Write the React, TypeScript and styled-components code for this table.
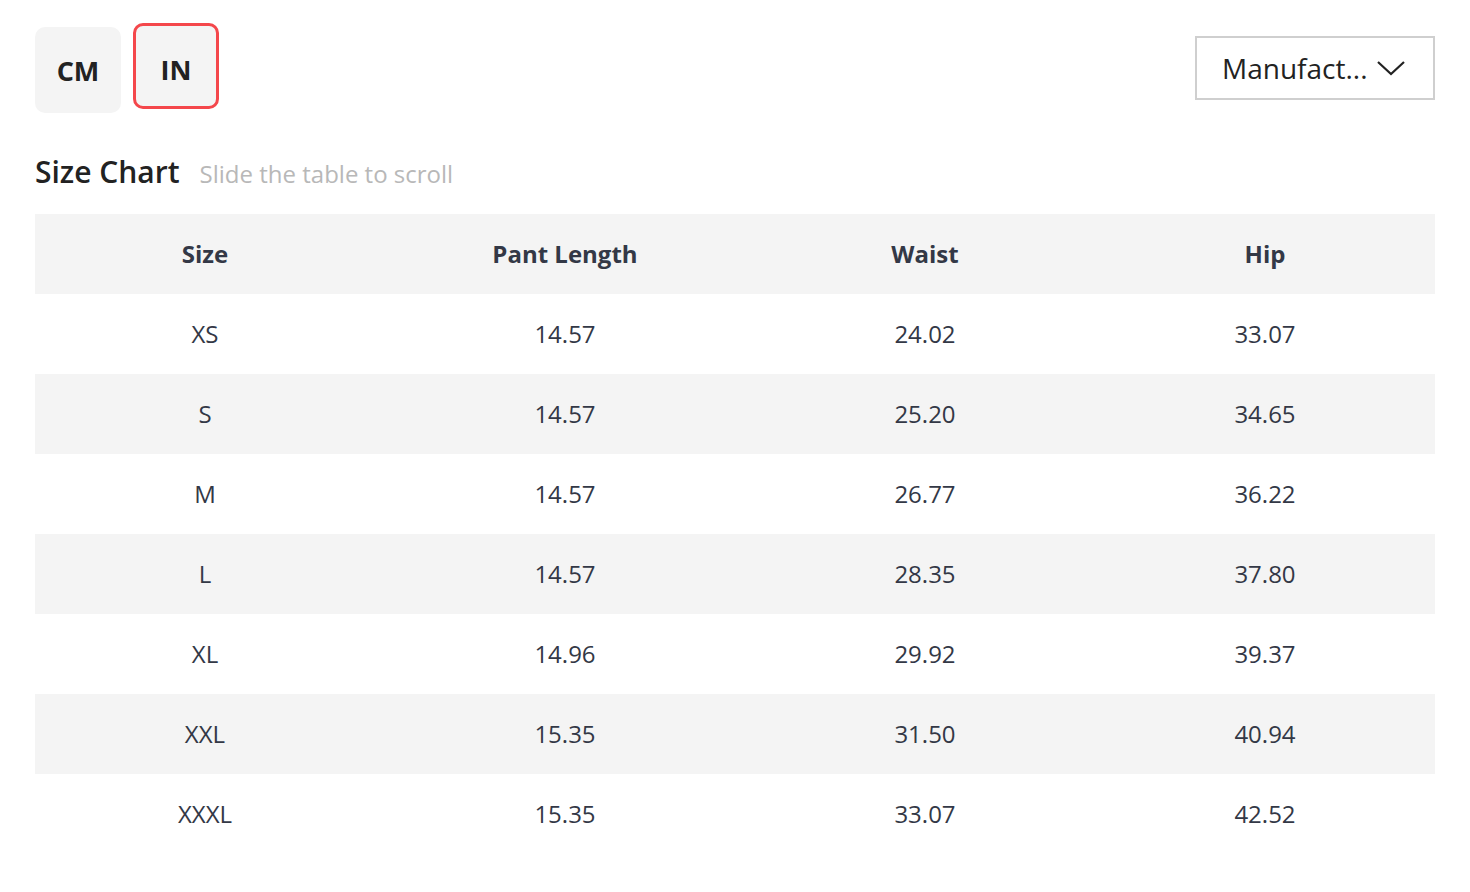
import React from "react";
import styled, { createGlobalStyle } from "styled-components";

const Global = createGlobalStyle`
  html, body { margin: 0; padding: 0; background: #fff; }
  body { font-family: "Open Sans", "Noto Sans", sans-serif; }
`;

const Page = styled.div`
  padding: 23px 35px 0 35px;
  width: 1400px;
`;

const TopBar = styled.div`
  display: flex;
  justify-content: space-between;
  align-items: flex-start;
`;

const UnitGroup = styled.div`
  display: flex;
  gap: 12px;
  align-items: flex-start;
`;

const UnitButton = styled.button<{ $active?: boolean }>`
  width: 86px;
  height: 86px;
  box-sizing: border-box;
  margin-top: ${(p) => (p.$active ? "0" : "4px")};
  border-radius: 10px;
  border: ${(p) => (p.$active ? "3px solid #f4474b" : "3px solid transparent")};
  background: #f4f4f4;
  font-family: "Open Sans", sans-serif;
  font-weight: 700;
  font-size: 27px;
  color: #222;
  display: flex;
  align-items: center;
  justify-content: center;
  padding: ${(p) => (p.$active ? "6px 0 0 0" : "0")};
  cursor: pointer;
`;

const Select = styled.div`
  margin-top: 13px;
  width: 240px;
  height: 64px;
  box-sizing: border-box;
  border: 2px solid #cfcfcf;
  display: flex;
  align-items: center;
  justify-content: space-between;
  padding: 0 27px 0 25px;
  font-size: 28px;
  color: #222;
`;

const TitleRow = styled.div`
  display: flex;
  align-items: baseline;
  gap: 20px;
  margin-top: 37px;
  height: 44px;
`;

const Title = styled.h2`
  margin: 0;
  font-size: 30px;
  font-weight: 600;
  color: #222;
  line-height: 44px;
`;

const Hint = styled.span`
  font-size: 24px;
  line-height: 44px;
  color: #b8b8b8;
`;

const Table = styled.div`
  margin-top: 20px;
  display: grid;
  grid-template-columns: 340px 380px 340px 340px;
`;

const Row = styled.div<{ $shade?: boolean }>`
  display: contents;
  & > div {
    background: ${(p) => (p.$shade ? "#f4f4f4" : "#fff")};
  }
`;

const Cell = styled.div<{ $head?: boolean }>`
  height: 80px;
  box-sizing: border-box;
  padding-bottom: 2px;
  display: flex;
  align-items: center;
  justify-content: center;
  font-size: 24px;
  font-weight: ${(p) => (p.$head ? 700 : 400)};
  color: #333846;
`;

const Chevron = () => (
  <svg width="30" height="16" viewBox="0 0 30 16" fill="none">
    <path d="M2 2 L15 14 L28 2" stroke="#222" strokeWidth="2.2" />
  </svg>
);

const headers = ["Size", "Pant Length", "Waist", "Hip"];
const rows = [
  ["XS", "14.57", "24.02", "33.07"],
  ["S", "14.57", "25.20", "34.65"],
  ["M", "14.57", "26.77", "36.22"],
  ["L", "14.57", "28.35", "37.80"],
  ["XL", "14.96", "29.92", "39.37"],
  ["XXL", "15.35", "31.50", "40.94"],
  ["XXXL", "15.35", "33.07", "42.52"],
];

export default function App() {
  return (
    <>
      <Global />
      <Page>
        <TopBar>
          <UnitGroup>
            <UnitButton>CM</UnitButton>
            <UnitButton $active>IN</UnitButton>
          </UnitGroup>
          <Select>
            <span>Manufact...</span>
            <Chevron />
          </Select>
        </TopBar>
        <TitleRow>
          <Title>Size Chart</Title>
          <Hint>Slide the table to scroll</Hint>
        </TitleRow>
        <Table>
          <Row $shade>
            {headers.map((h) => (
              <Cell key={h} $head>
                {h}
              </Cell>
            ))}
          </Row>
          {rows.map((r, i) => (
            <Row key={r[0]} $shade={i % 2 === 1}>
              {r.map((c, j) => (
                <Cell key={j}>{c}</Cell>
              ))}
            </Row>
          ))}
        </Table>
      </Page>
    </>
  );
}
